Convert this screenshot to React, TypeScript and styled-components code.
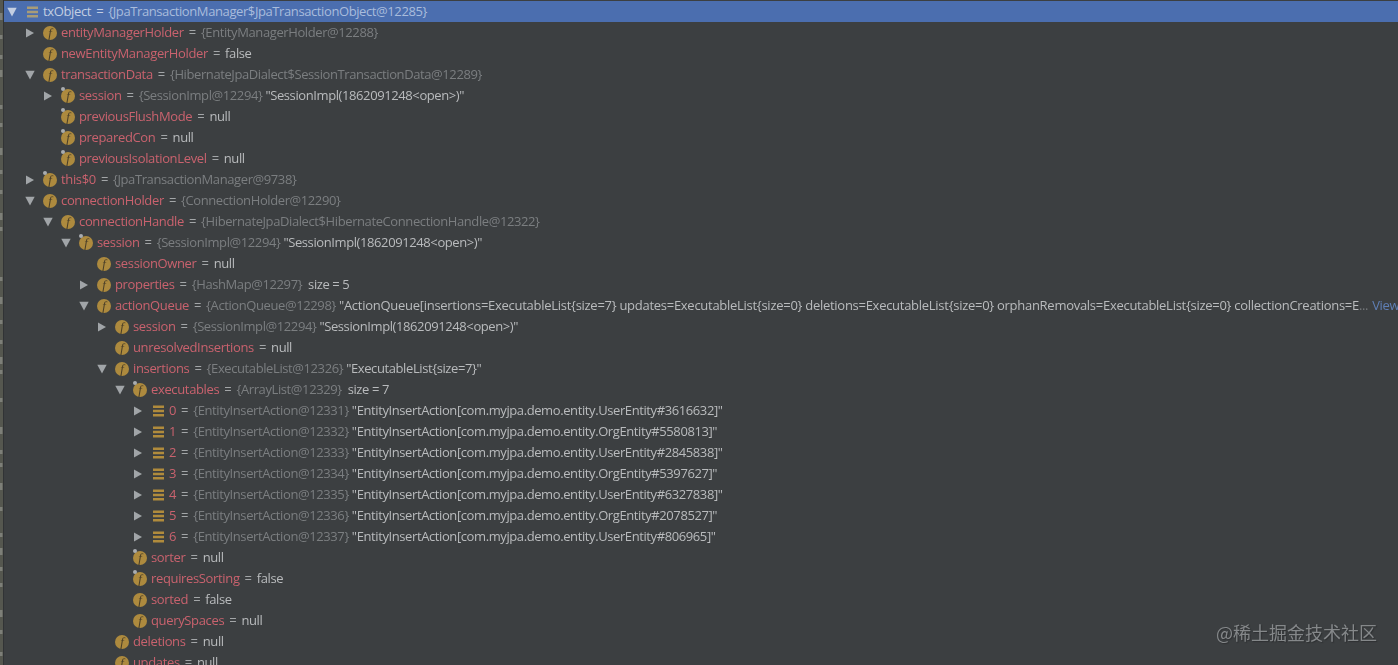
import styled, { createGlobalStyle } from 'styled-components';

type Kind = 'field' | 'pinned' | 'list';

type TreeRow = {
  depth: number;
  arrow?: 'open' | 'closed';
  kind: Kind;
  name: string;
  type?: string;
  value?: string;
  link?: boolean;
};

const entity = (n: number, id: number, text: string): TreeRow => ({
  depth: 7,
  arrow: 'closed',
  kind: 'list',
  name: String(n),
  type: `{EntityInsertAction@${id}}`,
  value: `"EntityInsertAction[com.myjpa.demo.entity.${text}]"`,
});

const rows: TreeRow[] = [
  { depth: 0, arrow: 'open', kind: 'list', name: 'txObject', type: '{JpaTransactionManager$JpaTransactionObject@12285}' },
  { depth: 1, arrow: 'closed', kind: 'field', name: 'entityManagerHolder', type: '{EntityManagerHolder@12288}' },
  { depth: 1, kind: 'field', name: 'newEntityManagerHolder', value: 'false' },
  { depth: 1, arrow: 'open', kind: 'field', name: 'transactionData', type: '{HibernateJpaDialect$SessionTransactionData@12289}' },
  { depth: 2, arrow: 'closed', kind: 'pinned', name: 'session', type: '{SessionImpl@12294}', value: '"SessionImpl(1862091248<open>)"' },
  { depth: 2, kind: 'pinned', name: 'previousFlushMode', value: 'null' },
  { depth: 2, kind: 'pinned', name: 'preparedCon', value: 'null' },
  { depth: 2, kind: 'pinned', name: 'previousIsolationLevel', value: 'null' },
  { depth: 1, arrow: 'closed', kind: 'pinned', name: 'this$0', type: '{JpaTransactionManager@9738}' },
  { depth: 1, arrow: 'open', kind: 'field', name: 'connectionHolder', type: '{ConnectionHolder@12290}' },
  { depth: 2, arrow: 'open', kind: 'field', name: 'connectionHandle', type: '{HibernateJpaDialect$HibernateConnectionHandle@12322}' },
  { depth: 3, arrow: 'open', kind: 'pinned', name: 'session', type: '{SessionImpl@12294}', value: '"SessionImpl(1862091248<open>)"' },
  { depth: 4, kind: 'field', name: 'sessionOwner', value: 'null' },
  { depth: 4, arrow: 'closed', kind: 'field', name: 'properties', type: '{HashMap@12297}', value: '\u00a0size = 5' },
  {
    depth: 4,
    arrow: 'open',
    kind: 'field',
    name: 'actionQueue',
    type: '{ActionQueue@12298}',
    value:
      '"ActionQueue[insertions=ExecutableList{size=7} updates=ExecutableList{size=0} deletions=ExecutableList{size=0} orphanRemovals=ExecutableList{size=0} collectionCreations=E',
    link: true,
  },
  { depth: 5, arrow: 'closed', kind: 'field', name: 'session', type: '{SessionImpl@12294}', value: '"SessionImpl(1862091248<open>)"' },
  { depth: 5, kind: 'field', name: 'unresolvedInsertions', value: 'null' },
  { depth: 5, arrow: 'open', kind: 'field', name: 'insertions', type: '{ExecutableList@12326}', value: '"ExecutableList{size=7}"' },
  { depth: 6, arrow: 'open', kind: 'pinned', name: 'executables', type: '{ArrayList@12329}', value: '\u00a0size = 7' },
  entity(0, 12331, 'UserEntity#3616632'),
  entity(1, 12332, 'OrgEntity#5580813'),
  entity(2, 12333, 'UserEntity#2845838'),
  entity(3, 12334, 'OrgEntity#5397627'),
  entity(4, 12335, 'UserEntity#6327838'),
  entity(5, 12336, 'OrgEntity#2078527'),
  entity(6, 12337, 'UserEntity#806965'),
  { depth: 6, kind: 'pinned', name: 'sorter', value: 'null' },
  { depth: 6, kind: 'pinned', name: 'requiresSorting', value: 'false' },
  { depth: 6, kind: 'field', name: 'sorted', value: 'false' },
  { depth: 6, kind: 'field', name: 'querySpaces', value: 'null' },
  { depth: 5, kind: 'field', name: 'deletions', value: 'null' },
  { depth: 5, kind: 'field', name: 'updates', value: 'null' },
];

// bits of the editor text that stick out at the left edge of the panel
const gutterMarks = [
  13, 35, 55, 70, 105, 123, 148, 170, 190, 213, 227, 277, 297, 320, 340, 357, 370, 398, 427, 450, 463, 483, 507, 533,
  548, 567, 583, 610, 630, 652,
];

const GlobalStyle = createGlobalStyle`
  html, body {
    margin: 0;
    height: 100%;
    overflow: hidden;
    background: #3c3f41;
  }
`;

const Page = styled.div`
  position: relative;
  display: flex;
  width: 1398px;
  height: 665px;
  overflow: hidden;
  background: #3c3f41;
  font-family: 'Open Sans', 'Noto Sans', sans-serif;
  font-size: 13px;
  letter-spacing: -0.35px;
`;

const Gutter = styled.svg`
  flex: 0 0 4px;
  display: block;
  width: 4px;
  height: 665px;
`;

const Tree = styled.div`
  flex: 1;
  min-width: 0;
  padding-top: 1px;
  filter: blur(0.35px);
`;

const Row = styled.div<{ $depth: number; $selected?: boolean }>`
  display: flex;
  align-items: center;
  height: 21px;
  padding-left: ${(p) => p.$depth * 18}px;
  white-space: nowrap;
  overflow: hidden;
  background: ${(p) => (p.$selected ? '#4b6eaf' : 'transparent')};
`;

const ArrowSlot = styled.span`
  flex: 0 0 15px;
  margin-right: 1px;
  display: flex;
  align-items: center;
  justify-content: center;
`;

const IconSlot = styled.span`
  position: relative;
  flex: 0 0 14px;
  height: 14px;
  margin: 0 4px 0 5px;
`;

const FieldBadge = styled.span`
  display: flex;
  align-items: center;
  justify-content: center;
  width: 14px;
  height: 14px;
  border-radius: 50%;
  background: #ad8a3e;
  color: #4a3f28;
  font-family: 'Liberation Serif', serif;
  font-style: italic;
  font-size: 13px;
  line-height: 14px;
  letter-spacing: 0;
`;

const Pin = styled.span`
  position: absolute;
  left: 0;
  top: -2px;
  width: 4px;
  height: 4px;
  border-radius: 50%;
  background: #a9adb0;
`;

const ListGlyph = styled.svg`
  display: block;
  margin: 1px 0 0 2px;
`;

const RowText = styled.span`
  display: flex;
  padding-bottom: 2px;
`;

const Name = styled.span<{ $selected?: boolean }>`
  color: ${(p) => (p.$selected ? '#c3cee2' : '#c9626e')};
`;

const Sep = styled.span<{ $selected?: boolean }>`
  color: ${(p) => (p.$selected ? '#c3cee2' : '#a3a6a8')};
  white-space: pre;
  margin: 0 2px;
`;

const TypeName = styled.span<{ $selected?: boolean }>`
  color: ${(p) => (p.$selected ? '#a9bcdc' : '#7b7e80')};
  letter-spacing: -0.4px;
`;

const Value = styled.span<{ $long?: boolean }>`
  color: #b9bbbd;
  white-space: pre;
  letter-spacing: ${(p) => (p.$long ? '-0.275px' : '-0.4px')};
`;

const Dots = styled.span`
  color: #74777a;
`;

const ViewLink = styled.span`
  color: #5f7fb5;
  margin-left: 4px;
`;

const Watermark = styled.div`
  position: absolute;
  right: 21px;
  bottom: 21px;
  color: #85888a;
  font-family: 'Noto Sans CJK SC', 'Noto Sans', sans-serif;
  font-size: 18px;
  line-height: 24px;
  letter-spacing: 0;
  text-shadow: 1px 1px 1px #2e3032;
`;

const Arrow = ({ dir, light }: { dir: 'open' | 'closed'; light?: boolean }) => (
  <svg width="10" height="10" viewBox="0 0 10 10">
    <path
      d={dir === 'open' ? 'M0.3 0.8H9.7L5 9.5Z' : 'M1 0.5V9.5L9 5Z'}
      fill={light ? '#c3cee2' : '#a1a5a8'}
    />
  </svg>
);

const ListIcon = ({ selected }: { selected: boolean }) => (
  <ListGlyph width="11" height="12" viewBox="0 0 11 12">
    <path d="M0 0.5H11V3H0ZM0 4.75H11V7.25H0ZM0 9H11V11.5H0Z" fill={selected ? '#a89c78' : '#b08b3c'} />
  </ListGlyph>
);

export default function App() {
  return (
    <>
      <GlobalStyle />
      <Page>
        <Gutter viewBox="0 0 4 665">
          <rect width="3" height="665" fill="#55574f" />
          <rect x="3" width="1" height="665" fill="#313335" />
          {gutterMarks.map((y, i) => (
            <rect key={y} y={y} width="2.5" height={i % 3 === 0 ? 7 : 4} fill="#7d7f78" />
          ))}
        </Gutter>
        <Tree>
          {rows.map((row, i) => {
            const selected = i === 0;
            return (
              <Row key={i} $depth={row.depth} $selected={selected}>
                <ArrowSlot>{row.arrow && <Arrow dir={row.arrow} light={selected} />}</ArrowSlot>
                <IconSlot>
                  {row.kind === 'list' ? <ListIcon selected={selected} /> : <FieldBadge>f</FieldBadge>}
                  {row.kind === 'pinned' && <Pin />}
                </IconSlot>
                <RowText>
                  <Name $selected={selected}>{row.name}</Name>
                  <Sep $selected={selected}> = </Sep>
                  {row.type && <TypeName $selected={selected}>{row.type}</TypeName>}
                  {row.value && <Value $long={row.link}>{row.type ? ' ' : ''}{row.value}</Value>}
                  {row.link && <Dots>...</Dots>}
                  {row.link && <ViewLink>View</ViewLink>}
                </RowText>
              </Row>
            );
          })}
        </Tree>
        <Watermark>@稀土掘金技术社区</Watermark>
      </Page>
    </>
  );
}
